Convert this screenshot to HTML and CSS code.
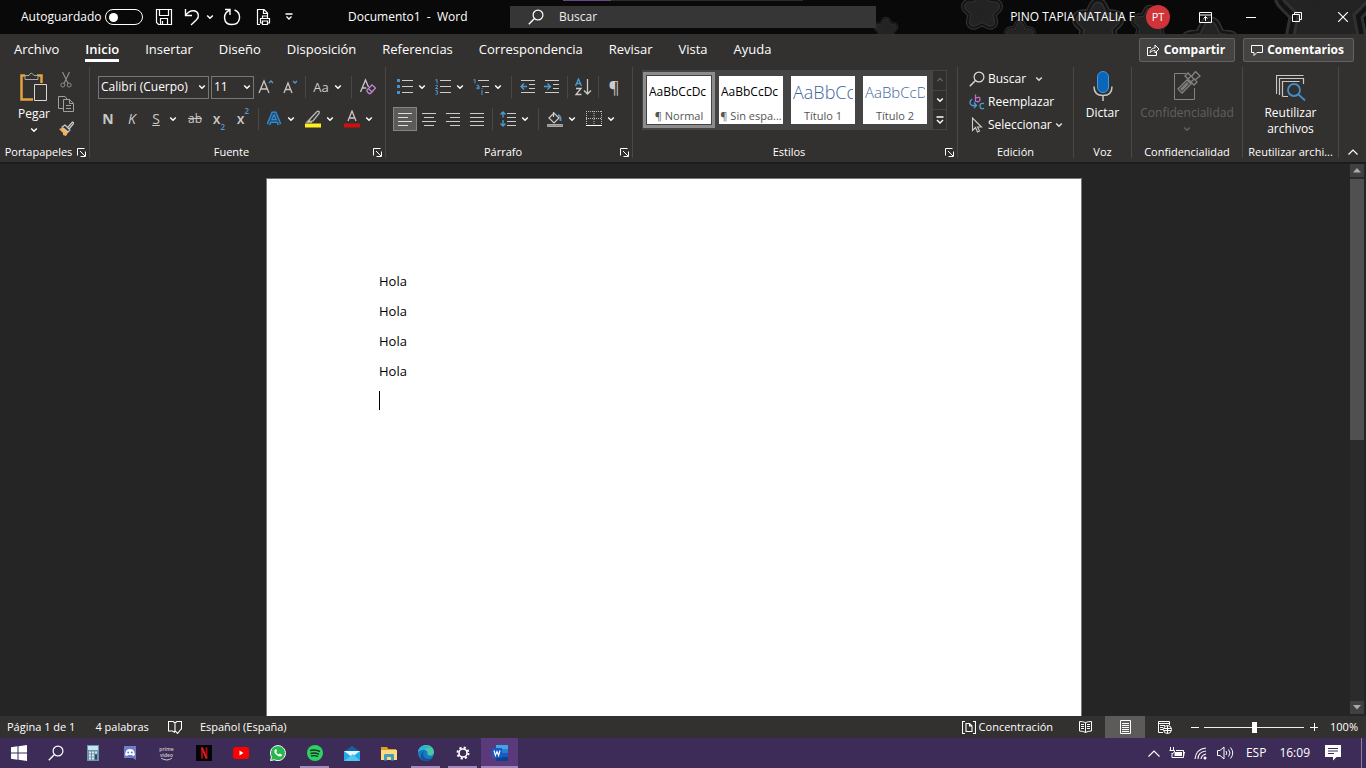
FILE: index.html
```html
<!DOCTYPE html>
<html lang="es">
<head>
<meta charset="utf-8">
<title>Documento1 - Word</title>
<link rel="stylesheet" href="styles.css">
</head>
<body>
<svg class="defs" aria-hidden="true">
  <symbol id="chev" viewBox="0 0 8 8"><path d="M1.2 2.5 4 5.2 6.800 2.500" fill="none" stroke="currentColor" stroke-width="1.500"/></symbol>
  <symbol id="launch" viewBox="0 0 9 9"><path d="M.5 7.500V.5H7.500M3 3l5 5M8.500 3.500v5h-5" fill="none" stroke="currentColor"/></symbol>
  <symbol id="lens" viewBox="0 0 16 16"><path d="M.8 15.200 6.200 9.800" stroke="currentColor" stroke-width="1.400"/><circle cx="10" cy="6" r="4.900" fill="none" stroke="currentColor" stroke-width="1.200"/></symbol>
  <symbol id="star" viewBox="0 0 40 40">
    <g stroke-linejoin="round">
      <path d="m20 9 3.500 7 7.500 1-5.500 5.500L27 30l-7-3.500L13 30l1.500-7.500L9 17l7.500-1z" fill="#303031" stroke="#303031" stroke-width="13"/>
      <path d="m20 9 3.500 7 7.500 1-5.500 5.500L27 30l-7-3.500L13 30l1.500-7.500L9 17l7.500-1z" fill="#141415" stroke="#141415" stroke-width="11"/>
      <path d="m20 9 3.500 7 7.500 1-5.500 5.500L27 30l-7-3.500L13 30l1.500-7.500L9 17l7.500-1z" fill="#303031" stroke="#303031" stroke-width="8"/>
      <path d="m20 9 3.500 7 7.500 1-5.500 5.500L27 30l-7-3.500L13 30l1.500-7.500L9 17l7.500-1z" fill="#232324" stroke="#232324" stroke-width="6"/>
    </g>
  </symbol>
</svg>

<header class="titlebar">
  <svg class="pattern" viewBox="0 0 500 34" aria-hidden="true">
    <use href="#star" x="6" y="15" width="28" height="28"/>
    <use href="#star" x="92" y="-14" width="48" height="48"/>
    <use href="#star" x="136" y="17" width="36" height="36"/>
    <use href="#star" x="202" y="-6" width="60" height="60"/>
    <use href="#star" x="262" y="2" width="44" height="44"/>
    <use href="#star" x="310" y="12" width="68" height="68"/>
    <use href="#star" x="400" y="-56" width="120" height="120"/>
  </svg>
  <div class="quick">
    <label class="autosave">Autoguardado <input type="checkbox"></label>
    <button class="q" aria-label="Guardar"><svg width="18" height="18"><path d="M1.500 1.500h15v15h-13l-2-2zM4.500 1.500v6h9v-6M5.500 16.500v-6h7v6M7.500 13v3" fill="none" stroke="currentColor" stroke-width="1.200"/></svg></button>
    <button class="q" aria-label="Deshacer"><svg width="16" height="18"><path d="M1.500 1v6.500H8M1.800 7.200C4 4 7 2.500 10 2.800c5 1 5.500 6 2.500 9L7 17" fill="none" stroke="currentColor" stroke-width="1.400"/></svg></button>
    <button class="ch" aria-label="Opciones de deshacer"><svg width="8" height="8"><use href="#chev"/></svg></button>
    <button class="q" aria-label="Repetir"><svg width="18" height="18"><path d="M2 1.500h5V7M7 2C-1 5.500 0 16.500 9 16.500S19 5 11.500 2" fill="none" stroke="currentColor" stroke-width="1.400"/></svg></button>
    <button class="q print" aria-label="Impresión rápida"><svg width="16" height="18"><path d="M4 16.500H1.500v-15H8l3.500 3.500v3M7.500 1.500v4h4M6.500 10.500V8h5v2.500M6.500 15h-2v-4.500h9V15h-2M6.500 13h5v3.500h-5z" fill="none" stroke="currentColor" stroke-width="1.200"/></svg></button>
    <button class="q more" aria-label="Personalizar"><svg width="8" height="8"><path d="M.5 1h7M1.500 3.500 4 6l2.500-2.500" fill="none" stroke="currentColor" stroke-width="1.300"/></svg></button>
  </div>
  <div class="doctitle">Documento1&nbsp; -&nbsp; Word</div>
  <label class="search"><svg width="16" height="16"><use href="#lens"/></svg><input type="text" placeholder="Buscar" aria-label="Buscar"></label>
  <div class="account"><span>PINO TAPIA NATALIA F</span><span class="avatar">PT</span></div>
  <div class="winbtns">
    <button aria-label="Opciones de la cinta"><svg width="13" height="11"><path d="M.5.500h12v10H.5zM.5 3h12M6.500 9V4.500M4.500 6.500l2-2 2 2" fill="none" stroke="currentColor"/></svg></button>
    <button aria-label="Minimizar"><svg width="10" height="10"><path d="M0 5.500h10" stroke="currentColor"/></svg></button>
    <button aria-label="Restaurar"><svg width="10" height="10"><path d="M.5 2.500h7v7h-7zM2.500 2.500v-2h7v7h-2" fill="none" stroke="currentColor"/></svg></button>
    <button aria-label="Cerrar"><svg width="10" height="10"><path d="m0 0 10 10M10 0 0 10" stroke="currentColor" stroke-width="1.200"/></svg></button>
  </div>
</header>

<nav class="tabs">
  <a href="#">Archivo</a><a href="#" class="active">Inicio</a><a href="#">Insertar</a><a href="#">Diseño</a><a href="#">Disposición</a><a href="#">Referencias</a><a href="#">Correspondencia</a><a href="#">Revisar</a><a href="#">Vista</a><a href="#">Ayuda</a>
  <div class="share">
    <button><svg width="13" height="12"><path d="M4 3.500H.5v8h9V8M3 8.500C3.500 5 6 4 8 4V1l4 4-4 4V6.500C6 6.500 4.500 7 3 8.500z" fill="none" stroke="currentColor"/></svg>Compartir</button>
    <button><svg width="12" height="12"><path d="M.5 1.500h11v7H6l-3 3v-3H.5z" fill="none" stroke="currentColor"/></svg>Comentarios</button>
  </div>
</nav>

<section class="ribbon">
  <div class="group g-clip">
    <div class="body clip">
      <button class="big">
        <svg width="28" height="30"><path d="M5 3.500H1.500v24H13M17 3.500h4.500V11" fill="none" stroke="#e5a33d" stroke-width="2.500"/><path d="M5 7.500v-4h4q2-4.500 5 0h4v4z" fill="#33312f" stroke="#a8a8a8"/><path d="M14.500 12.500h12v16h-12z" fill="#33312f" stroke="#d8d8d8"/></svg>
        <span>Pegar</span><svg width="8" height="8"><use href="#chev"/></svg>
      </button>
      <div class="stack">
        <button class="b" aria-label="Cortar"><svg width="12" height="16"><path d="M2.500 0 8 11.500M9.500 0 4 11.500" fill="none" stroke="#8c8c8c" stroke-width="1.200"/><circle cx="2.800" cy="13" r="2" fill="none" stroke="#8c8c8c"/><circle cx="9.200" cy="13" r="2" fill="none" stroke="#8c8c8c"/></svg></button>
        <button class="b" aria-label="Copiar"><svg width="16" height="16"><path d="M5 12.500H.5V.5H7L9 3M5.500 3.500h6l4 4v8h-10zM11.500 3.500v4h4M8 9.500h5M8 12.500h5" fill="none" stroke="#a0a0a0"/></svg></button>
        <button class="b" aria-label="Copiar formato"><svg width="16" height="15"><path d="m1 8 6-2 4 4-3 5-3-1v-2z" fill="#edb45c"/><path d="m7 4 5 5-2 2-6-5zM10 6l4.500-5L16 2l-5 6" fill="#33312f" stroke="#ccc" stroke-width="1.200"/></svg></button>
      </div>
    </div>
    <div class="glabel"><span>Portapapeles</span><button aria-label="Más de Portapapeles"><svg width="9" height="9"><use href="#launch"/></svg></button></div>
  </div>

  <div class="group g-font">
    <div class="body rows">
      <div class="row combos">
        <span class="combo fam"><select aria-label="Fuente"><option>Calibri (Cuerpo)</option></select><svg width="8" height="8"><use href="#chev"/></svg></span>
        <span class="combo size"><select aria-label="Tamaño"><option>11</option></select><svg width="8" height="8"><use href="#chev"/></svg></span>
        <button class="b" aria-label="Aumentar"><svg width="16" height="16"><path d="M1 14 6 2l5 12M2.800 10h6.400" fill="none" stroke="#c8c8c8" stroke-width="1.300"/><path d="m11 4 2-2 2 2" fill="none" stroke="#4a9bd8" stroke-width="1.300"/></svg></button>
        <button class="b" aria-label="Disminuir"><svg width="16" height="16"><path d="m2 14 4-10 4 10M3.500 10.500h5" fill="none" stroke="#c8c8c8" stroke-width="1.300"/><path d="m11 2 2 2 2-2" fill="none" stroke="#4a9bd8" stroke-width="1.300"/></svg></button>
        <i class="sep"></i>
        <button class="b case">Aa</button><button class="ch" aria-label="Opciones de mayúsculas"><svg width="8" height="8"><use href="#chev"/></svg></button>
        <i class="sep wide"></i>
        <button class="b" aria-label="Borrar formato"><svg width="18" height="18"><path d="M1.500 14 6.500 2l3 7M3.300 10h4" fill="none" stroke="#c8c8c8" stroke-width="1.300"/><path d="m8 12 5-5 3.500 3-5 5.500H10L8 13.500zM9.500 10.500l3.500 3.500" fill="none" stroke="#c183cf" stroke-width="1.300"/></svg></button>
      </div>
      <div class="row">
        <button class="b t bold">N</button><button class="b t ital">K</button><button class="b t under">S</button><button class="ch" aria-label="Opciones de subrayado"><svg width="8" height="8"><use href="#chev"/></svg></button>
        <button class="b t strike gap">ab</button>
        <button class="b t script">x<sub>2</sub></button><button class="b t script">x<sup>2</sup></button>
        <i class="sep"></i>
        <button class="b" aria-label="Efectos de texto"><svg width="16" height="16"><path d="m2.500 13.500 4.500-11h2l4.500 11M4.500 10h7" fill="none" stroke="#2e8fdc" stroke-width="4"/><path d="m2.500 13.500 4.500-11h2l4.500 11M4.500 10h7" fill="none" stroke="#2b4d6b" stroke-width="1.500"/></svg></button><button class="ch" aria-label="Opciones de efectos"><svg width="8" height="8"><use href="#chev"/></svg></button>
        <button class="b gap" aria-label="Resaltado"><svg width="16" height="18"><path d="m5 9 7-7.500q3-1 2 2L8 11l-4 1zM5 9 2 12h5" fill="none" stroke="#bbb" stroke-width="1.300"/><path d="M0 13.500h16v4H0z" fill="#ffef20"/></svg></button><button class="ch" aria-label="Opciones de resaltado"><svg width="8" height="8"><use href="#chev"/></svg></button>
        <button class="b gap" aria-label="Color de fuente"><svg width="16" height="18"><path d="m4 11 4-10 4 10M5.300 8h5.400" fill="none" stroke="#c8c8c8" stroke-width="1.300"/><path d="M0 13.500h16v4H0z" fill="#d01010"/></svg></button><button class="ch" aria-label="Opciones de color"><svg width="8" height="8"><use href="#chev"/></svg></button>
      </div>
    </div>
    <div class="glabel"><span>Fuente</span><button aria-label="Más de Fuente"><svg width="9" height="9"><use href="#launch"/></svg></button></div>
  </div>

  <div class="group g-para">
    <div class="body rows">
      <div class="row">
        <button class="b" aria-label="Viñetas"><svg width="16" height="16"><path d="M0 0h3v3H0zM0 6h3v3H0zM0 12h3v3H0z" fill="#4a8fc7"/><path d="M5 1.500h11M5 7.500h11M5 13.500h11" stroke="#ccc"/></svg></button><button class="ch" aria-label="Opciones de viñetas"><svg width="8" height="8"><use href="#chev"/></svg></button>
        <button class="b list" aria-label="Numeración"><svg width="16" height="16"><path d="M.5 1 2 .500v4M.5 6.500Q3 5.500 2.500 7.500L.5 9.500h2.500M.5 11.500q2.500-.5 2 1.200l-1 .5q2 .3 1 1.800-1 .8-2 .3" fill="none" stroke="#4a9bd8"/><path d="M5 1.500h11M5 7.500h11M5 13.500h11" stroke="#ccc"/></svg></button><button class="ch" aria-label="Opciones de numeración"><svg width="8" height="8"><use href="#chev"/></svg></button>
        <button class="b list" aria-label="Lista multinivel"><svg width="16" height="16"><path d="M.5 1 2 .500v4M3.500 6.500q2.500-1 2.500.5v3.200M6 8q-2.500 0-2.500 1.200T6 9.300M9 11v5M9 9v1" fill="none" stroke="#4a9bd8"/><path d="M5 1.500h11M9 7.500h7M12 13.500h4" stroke="#ccc"/></svg></button><button class="ch" aria-label="Opciones multinivel"><svg width="8" height="8"><use href="#chev"/></svg></button>
        <i class="sep wide"></i>
        <button class="b" aria-label="Disminuir sangría"><svg width="16" height="16"><path d="M1 1.500h14M9 5.500h6M9 9.500h6M1 13.500h14" stroke="#ccc"/><path d="M7 7.500H1M4 4.500l-3 3 3 3" fill="none" stroke="#4a9bd8" stroke-width="1.300"/></svg></button>
        <button class="b" aria-label="Aumentar sangría"><svg width="16" height="16"><path d="M1 1.500h14M9 5.500h6M9 9.500h6M1 13.500h14" stroke="#ccc"/><path d="M0 7.500h6M3.500 4.500l3 3-3 3" fill="none" stroke="#4a9bd8" stroke-width="1.300"/></svg></button>
        <i class="sep"></i>
        <button class="b" aria-label="Ordenar"><svg width="18" height="18"><path d="m1.500 8 3-7 3 7M2.500 5.500h4" fill="none" stroke="#4a9bd8" stroke-width="1.300"/><path d="M2 10.500h5l-5 6h5.500M13.500 1v15M10 12.500l3.500 3.500 3.500-3.500" fill="none" stroke="#ccc" stroke-width="1.300"/></svg></button>
        <i class="sep"></i>
        <button class="b pil">¶</button>
      </div>
      <div class="row">
        <button class="b on" aria-label="Izquierda"><svg width="16" height="15"><path d="M1 1.500h14M1 5.500h10M1 9.500h14M1 13.500h10" stroke="#ddd"/></svg></button>
        <button class="b" aria-label="Centrar"><svg width="16" height="15"><path d="M1 1.500h14M3 5.500h10M1 9.500h14M3 13.500h10" stroke="#ccc"/></svg></button>
        <button class="b" aria-label="Derecha"><svg width="16" height="15"><path d="M1 1.500h14M5 5.500h10M1 9.500h14M5 13.500h10" stroke="#ccc"/></svg></button>
        <button class="b" aria-label="Justificar"><svg width="16" height="15"><path d="M1 1.500h14M1 5.500h14M1 9.500h14M1 13.500h14" stroke="#ccc"/></svg></button>
        <i class="sep"></i>
        <button class="b" aria-label="Interlineado"><svg width="16" height="16"><path d="M7 2.500h9M7 6.500h9M7 10.500h9M7 14.500h9" stroke="#ccc"/><path d="M3 1v5.500M.5 3.500 3 1l2.500 2.500M3 9v6M.5 12.500 3 15l2.500-2.500" fill="none" stroke="#4a9bd8" stroke-width="1.300"/></svg></button><button class="ch" aria-label="Opciones de interlineado"><svg width="8" height="8"><use href="#chev"/></svg></button>
        <i class="sep wide"></i>
        <button class="b" aria-label="Sombreado"><svg width="16" height="17"><path d="m2 7 5-5 5 5-5 5zM6.500 6V1" fill="none" stroke="#ccc" stroke-width="1.200"/><path d="M11 4q3 1 2.500 6" fill="none" stroke="#5d92c4" stroke-width="2"/><path d="M.5 13.500h15v2H.5z" fill="#888" stroke="#aaa"/></svg></button><button class="ch" aria-label="Opciones de sombreado"><svg width="8" height="8"><use href="#chev"/></svg></button>
        <button class="b gap" aria-label="Bordes"><svg width="16" height="16"><path d="M.5 0v14M15.500 0v14M8 0v14M0 .5h16M0 7.500h16" stroke="#bbb" stroke-dasharray="1 1"/><path d="M0 14.500h16" stroke="#fff"/></svg></button><button class="ch" aria-label="Opciones de bordes"><svg width="8" height="8"><use href="#chev"/></svg></button>
      </div>
    </div>
    <div class="glabel"><span>Párrafo</span><button aria-label="Más de Párrafo"><svg width="9" height="9"><use href="#launch"/></svg></button></div>
  </div>

  <div class="group g-styles">
    <div class="body">
      <div class="gallery">
        <button class="tile sel"><span class="smp">AaBbCcDc</span><span class="nm">¶ Normal</span></button>
        <button class="tile"><span class="smp">AaBbCcDc</span><span class="nm">¶ Sin espa...</span></button>
        <button class="tile h1"><span class="smp">AaBbCc</span><span class="nm">Título 1</span></button>
        <button class="tile h2"><span class="smp">AaBbCcD</span><span class="nm">Título 2</span></button>
        <div class="spin">
          <button class="off" aria-label="Anterior"><svg width="8" height="8"><path d="M1.500 5 4 2.500 6.500 5" fill="none" stroke="currentColor" stroke-width="1.300"/></svg></button>
          <button aria-label="Siguiente"><svg width="8" height="8"><use href="#chev"/></svg></button>
          <button aria-label="Más estilos"><svg width="8" height="8"><path d="M.5 1h7M1 4l3 3 3-3" fill="none" stroke="currentColor" stroke-width="1.400"/></svg></button>
        </div>
      </div>
    </div>
    <div class="glabel"><span>Estilos</span><button aria-label="Más de Estilos"><svg width="9" height="9"><use href="#launch"/></svg></button></div>
  </div>

  <div class="group g-edit">
    <div class="body edit">
      <button><svg width="16" height="16"><use href="#lens"/></svg><span>Buscar</span><svg class="far" width="8" height="8"><use href="#chev"/></svg></button>
      <button><svg width="16" height="16"><g fill="none" stroke-width="1.300"><path d="M6.500.5V8M6.500 4q5-2 4.500 1.500Q10 9 6.500 7" stroke="#bf6fce"/><path d="M15 9.500q-4-1-4 2.500t4 2.500M3 5q-4 4 0 6.500h4M5 8.500l2.500 3L5 14" stroke="#4a9bd8"/></g></svg><span>Reemplazar</span></button>
      <button><svg width="16" height="16"><path d="M3.500 1v12.500l3-3 2 4.500 2-1-2-4h4z" fill="none" stroke="#ccc" stroke-width="1.100"/></svg><span>Seleccionar</span><svg width="8" height="8"><use href="#chev"/></svg></button>
    </div>
    <div class="glabel"><span>Edición</span></div>
  </div>

  <div class="group g-voice">
    <div class="body"><button class="big"><svg width="20" height="30"><rect x="4.500" y=".5" width="11" height="21" rx="5.500" fill="#0a66b8" stroke="#4796d8"/><path d="M1 15.500q0 9 9 9t9-9M10 24.500V30" fill="none" stroke="#c8c8c8" stroke-width="1.500"/></svg><span>Dictar</span></button></div>
    <div class="glabel"><span>Voz</span></div>
  </div>

  <div class="group g-conf">
    <div class="body"><button class="big" disabled><svg width="28" height="30"><path d="M13 2.500H1.500v26h20V17" fill="none" stroke="#858381"/><path d="m5 18 9-9 4 4-9 9zM8 18l6-6 1 1-6 6zM12 5l3-3 9 9-3 3zM18.500 5.500l4-5 4.500 4.500-5 4M15 8l3-3M18 11l3-3" fill="none" stroke="#858381" stroke-width="1.300"/></svg><span>Confidencialidad</span><svg width="8" height="8"><use href="#chev"/></svg></button></div>
    <div class="glabel"><span>Confidencialidad</span></div>
  </div>

  <div class="group g-reuse">
    <div class="body"><button class="big"><svg width="30" height="30"><path d="M.5 23V4.500h27M3.500 24V7.500h24V13M6.500 25.500v-15h17M6.500 25.500H12" fill="none" stroke="#c8c8c8" stroke-width="1.200"/><circle cx="18" cy="19" r="6" fill="none" stroke="#3f8fcc" stroke-width="1.800"/><path d="m22.500 23.500 6.500 6" stroke="#3f8fcc" stroke-width="1.800"/></svg><span>Reutilizar<br>archivos</span></button></div>
    <div class="glabel"><span>Reutilizar archi...</span></div>
  </div>
  <button class="collapse" aria-label="Contraer"><svg width="10" height="6"><path d="m.5 5.500 4.500-4.500 4.500 4.500" fill="none" stroke="currentColor" stroke-width="1.200"/></svg></button>
</section>

<main class="workspace">
  <div class="canvas">
    <article class="page"><p>Hola</p><p>Hola</p><p>Hola</p><p>Hola</p><div class="caret"></div></article>
  </div>
  <div class="scroll">
    <button aria-label="Arriba"><svg width="8" height="5"><path d="M0 4.500 4 0l4 4.500z" fill="currentColor"/></svg></button>
    <div class="track"><div class="thumb"></div></div>
    <button aria-label="Abajo"><svg width="8" height="5"><path d="M0 0h8L4 4.500z" fill="currentColor"/></svg></button>
  </div>
</main>

<footer class="status">
  <span>Página 1 de 1</span><span class="words">4 palabras</span>
  <button class="proof" aria-label="Revisión"><svg width="14" height="13"><path d="M7 11.500 4.500 10H.5V.5H5L7 2l2-1.500h4.500v8M7 2v9M7.500 10l2 2.500 4-5" fill="none" stroke="currentColor" stroke-width="1.100"/></svg></button>
  <span class="lang">Español (España)</span>
  <button class="focus"><svg width="14" height="13"><path d="M3 .5H.5v12H3M11 .5h2.500v12H11M4 2.500h3.500L10 5v5.500H4zM7.500 2.500V5H10" fill="none" stroke="currentColor" stroke-width="1.100"/></svg>Concentración</button>
  <button class="view" aria-label="Lectura"><svg width="13" height="12"><path d="M6.500 1.500v10M6.500 1.500Q4 .5.500.500v9.500q3.500 0 6 1.500 2.500-1.500 6-1.500V.5q-3.500 0-6 1M2 3.500h3M2 5.500h3M2 7.500h3M8 3.500h3M8 5.500h3M8 7.500h3" fill="none" stroke="currentColor"/></svg></button>
  <button class="view on" aria-label="Impresión"><svg width="11" height="14"><path d="M.5.500h10v13H.5zM2 3.500h7M2 5.500h7M2 7.500h7M2 9.500h7M2 11.500h7" fill="none" stroke="currentColor"/></svg></button>
  <button class="view" aria-label="Web"><svg width="14" height="13"><path d="M5 11.500H.5V.5h11V4M.5 2.500h11M2 4.500h5M2 6.500h3M2 8.500h3" fill="none" stroke="currentColor"/><circle cx="9.500" cy="8.500" r="4" fill="none" stroke="currentColor"/><path d="M5.500 7.500h8M5.500 9.500h8M9.500 4.500v8" stroke="currentColor"/></svg></button>
  <button class="zb" aria-label="Alejar"><svg width="9" height="9"><path d="M0 4.500h8" stroke="currentColor"/></svg></button>
  <input type="range" min="0" max="100" value="50" aria-label="Zoom">
  <button class="zb" aria-label="Acercar"><svg width="9" height="9"><path d="M0 4.500h8M4.500 0v8" stroke="currentColor"/></svg></button>
  <span class="pct">100%</span>
</footer>

<nav class="taskbar">
  <button aria-label="Inicio"><svg width="16" height="16"><path d="m0 2.200 6.500-.9v6.200H0zM7.500 1.200 16 0v7.500H7.500zM0 8.500h6.500v6.200L0 13.800zM7.500 8.500H16V16l-8.500-1.200z" fill="#fff"/></svg></button>
  <button aria-label="Buscar"><svg width="16" height="16"><use href="#lens"/></svg></button>
  <button aria-label="Calculadora"><svg width="12" height="16"><path d="M0 0h12v16H0z" fill="#6f93a8"/><path d="M1 1h10v4H1z" fill="#c3e7f0"/><path d="M2 6.500h2v2H2zM5 6.500h2v2H5zM8 6.500h2v2H8zM2 9.500h2v2H2zM5 9.500h2v2H5zM2 12.500h2v2H2zM5 12.500h2v2H5z" fill="#dbe9ef"/><path d="M8 9.500h2v5H8z" fill="#244d76"/></svg></button>
  <button aria-label="Discord"><svg width="12" height="14"><path d="M0 0h12v14l-3-2H0z" fill="#6c7fc8"/><path d="M2 5q1-2 4-2t4 2l1 4-2 1-1-1H4l-1 1-2-1z" fill="#fff"/><circle cx="4.200" cy="6.500" r="1" fill="#6c7fc8"/><circle cx="7.800" cy="6.500" r="1" fill="#6c7fc8"/></svg></button>
  <button aria-label="Prime Video" class="prime"><span>prime</span><span>video</span><svg width="12" height="3"><path d="M0 0q6 4 11 0" fill="none" stroke="currentColor"/></svg></button>
  <button aria-label="Netflix"><svg width="16" height="16"><path d="M0 0h16v16H0z" fill="#050505"/><path d="M5 2.500h2v11H5zM9.500 2.500h2v11h-2z" fill="#9e0b12"/><path d="M5 2.500h2l4.500 11h-2z" fill="#e51a22"/></svg></button>
  <button aria-label="YouTube"><svg width="16" height="12"><rect width="16" height="12" rx="3" fill="#f00"/><path d="m6.500 3.500 4 2.500-4 2.500z" fill="#fff"/></svg></button>
  <button aria-label="WhatsApp"><svg width="16" height="16"><path d="M.5 15.500 1.500 12A7.500 7.500 0 1 1 4.500 14.800z" fill="#28b64f" stroke="#fff"/><path d="M5 4.500q1-1 1.500 0L7 6 6.200 7q1 2 2.600 2.600l1-1 2 1q.5.8-.6 1.600-1.700 1-4.500-1.200T4.300 6z" fill="#fff"/></svg></button>
  <button aria-label="Spotify" class="open"><svg width="16" height="16"><circle cx="8" cy="8" r="8" fill="#2bd262"/><path d="M3 5.500q5-1.500 10 1M3.500 8.500q4.500-1.200 8.500.8M4 11q4-1 7 .7" fill="none" stroke="#1b3327" stroke-width="1.400"/></svg></button>
  <button aria-label="Correo"><svg width="16" height="15"><path d="M0 5.500 8 0l8 5.500z" fill="#1362a8"/><path d="M0 5h16v10H0z" fill="#24a9e8"/><path d="M0 5h16L8 11z" fill="#e9f7fc"/><path d="m0 15 9-7 7 7z" fill="#50c6f3"/></svg></button>
  <button aria-label="Explorador"><svg width="16" height="15"><path d="M0 1h6l1.500 2H15v4H0z" fill="#e39b22"/><path d="M0 4h16v10H0z" fill="#fbdc7c"/><path d="M3 9q0-1 1-1h8q1 0 1 1v5.500h-3V11H6v3.500H3z" fill="#4a9cbf"/></svg></button>
  <button aria-label="Edge" class="open"><svg width="16" height="16"><circle cx="8" cy="8" r="8" fill="#1579c6"/><path d="M0 7C1 1 6 0 8 0c5 0 8 3.500 8 7 0 3-2.500 4-5 3.500Q9 10 9.500 8.500C10 6 7 4 4 4.500Q1 5 0 7z" fill="#49c9a0"/><path d="M0 7q1-5 6-6 4-1 7 2-4-1-6 1.500Q3 4 0 7z" fill="#2fb1dd"/><path d="M6 6q-3 5 2 7.500 3 1 6-.5-2 3-6 3-6-1-5-6 1-3 3-4z" fill="#155099"/></svg></button>
  <button aria-label="Configuración" class="open"><svg width="14" height="14"><circle cx="7" cy="7" r="4" fill="none" stroke="#fff" stroke-width="1.600"/><circle cx="7" cy="7" r="5.500" fill="none" stroke="#fff" stroke-width="2" stroke-dasharray="2.160 2.160"/></svg></button>
  <button aria-label="Word" class="open current"><svg width="16" height="16"><path d="M4 0h12v4H4z" fill="#41a5ee"/><path d="M4 4h12v4H4z" fill="#2b7cd3"/><path d="M4 8h12v4H4z" fill="#185abd"/><path d="M4 12h12v4H4z" fill="#103f91"/><path d="M0 3h10v10H0z" fill="#185abd"/><path d="m2 5.500 1.400 5L5 6.500l1.600 4 1.400-5" fill="none" stroke="#fff" stroke-width="1.200"/></svg></button>
  <div class="tray">
    <button aria-label="Iconos ocultos"><svg width="12" height="7"><path d="m.5 6.500 5.500-5.500 5.500 5.500" fill="none" stroke="currentColor" stroke-width="1.200"/></svg></button>
    <button aria-label="Batería"><svg width="16" height="12"><path d="M1.500 0v3M4.500 0v3M.5 3.500h5V5L3 7M3 6v4.500h11.500v-7H7M14.500 5.500H16v3" fill="none" stroke="currentColor"/><path d="M5.500 5H13v4H5.500z" fill="currentColor"/></svg></button>
    <button aria-label="Wi-Fi"><svg width="14" height="13"><path d="M1 12Q2 2 12 1M4 12q0-7 8-8M7 12q.500-4 5-5" fill="none" stroke="currentColor" stroke-width="1.100"/><circle cx="11" cy="11" r="1.500" fill="currentColor"/></svg></button>
    <button aria-label="Volumen"><svg width="17" height="14"><path d="M.5 4.500H3l4-3.500v12L3 9.500H.5zM9 5q1.500 2 0 4M11.500 3.500q3 3.500 0 7M13.500 1.500q4.500 5.500 0 11" fill="none" stroke="currentColor"/></svg></button>
    <span class="kb">ESP</span><span class="clock">16:09</span>
    <button class="note" aria-label="Notificaciones"><svg width="16" height="16"><path d="M0 0h16v12h-4.500L8 15.500V12H0z" fill="currentColor"/><path d="M3 3.500h10M3 6h10M3 8.500h6" stroke="#3d2c57"/></svg></button>
  </div>
</nav>
</body>
</html>
```
FILE: styles.css
```css
* { box-sizing: border-box; }
html, body { height: 100%; margin: 0; }
body { display: flex; flex-direction: column; overflow: hidden; background: #252525; color: #fff; font: 12px/16px "Open Sans", "Noto Sans", sans-serif; }
button { display: flex; align-items: center; justify-content: center; flex: none; padding: 0; border: 0; background: none; color: inherit; font: inherit; }
a { color: inherit; text-decoration: none; }
svg { display: block; flex: none; }
.defs { position: absolute; width: 0; height: 0; }

.titlebar { position: relative; display: flex; align-items: center; flex: none; height: 34px; background: #090909; }
.titlebar > * { position: relative; }
.titlebar > .pattern { position: absolute; top: 0; right: 0; width: 500px; height: 34px; }
.titlebar::after { content: ""; position: absolute; top: 0; left: 563px; width: 240px; height: 1px; background: linear-gradient(90deg, #65478a 20%, #2c2c2c 20%); }
.quick { display: flex; align-items: center; width: 348px; padding-left: 21px; }
.autosave { display: flex; align-items: center; flex: none; width: 122px; margin-right: 7px; white-space: nowrap; }
.autosave input { appearance: none; display: flex; align-items: center; width: 38px; height: 16px; margin: 0 0 0 auto; padding-left: 3px; border: 1px solid #fff; border-radius: 8px; }
.autosave input::before { content: ""; width: 9px; height: 9px; border-radius: 50%; background: #fff; }
.q { width: 32px; height: 32px; }
.q + .q { margin-left: -2px; }
.ch { width: 12px; height: 24px; margin-left: -1px; }
.quick .ch { margin-left: -4px; }
.quick .q:first-of-type { width: 28px; }
.quick .print { margin-left: 0; }
.quick .more { width: 18px; margin-left: 0; }
.doctitle { width: 162px; white-space: nowrap; }
.search { display: flex; align-items: center; flex: 0 1 366px; height: 22px; padding-left: 18px; background: #363636; }
.search input { flex: 1; min-width: 0; margin-left: 15px; padding: 0; border: 0; outline: 0; background: none; color: #fff; font: inherit; }
.search input::placeholder { color: #eee; opacity: 1; }
.account { display: flex; align-items: center; gap: 11px; margin-left: auto; white-space: nowrap; }
.avatar { width: 24px; height: 24px; border-radius: 50%; background: #d13438; line-height: 24px; text-align: center; font-size: 11px; }
.winbtns { display: flex; margin-left: 12px; }
.winbtns button { width: 46px; height: 34px; }

.tabs { display: flex; align-items: center; flex: none; gap: 26px; height: 32px; padding: 0 12px 0 14px; background: #33312f; font-size: 13px; line-height: 18px; white-space: nowrap; }
.tabs a { padding: 2px 0 1px; border-bottom: 3px solid transparent; }
.tabs .active { border-color: #fff; font-weight: 600; }
.share { display: flex; gap: 8px; margin-left: auto; }
.share button { gap: 4px; height: 24px; padding: 0 9px 0 7px; border: 1px solid #626262; border-radius: 2px; background: #444342; font-size: 12px; font-weight: 700; }

.ribbon { display: flex; flex: none; height: 96px; padding: 1px 0 4px; background: #33312f; }
.ribbon + .workspace { border-top: 2px solid #1c1c1c; }
.group { display: flex; flex: none; flex-direction: column; justify-content: space-between; border-right: 1px solid #4a4846; }
.g-clip { width: 90px; }
.g-font { width: 296px; }
.g-para { width: 247px; }
.g-styles { flex: 1; }
.g-edit { width: 116px; }
.g-voice { width: 58px; }
.g-conf { width: 111px; }
.g-reuse { width: 96px; }
.glabel { display: flex; align-items: center; height: 12px; padding: 0 2px; white-space: nowrap; font-size: 11px; }
.glabel span { flex: 1; text-align: center; }
.glabel button { width: 12px; height: 12px; }
.clip { display: flex; padding: 1px 0 0 12px; }
.big { flex-direction: column; width: 100%; gap: 4px; padding-top: 4px; }
.big:disabled { color: #62605e; }
.clip .big { width: 44px; justify-content: flex-start; }
.stack { display: flex; flex-direction: column; }
.stack .b { width: 20px; }
.b { width: 24px; height: 24px; }
.rows { display: flex; flex-direction: column; gap: 8px; padding: 8px 0 0 6px; }
.g-para .rows { padding-left: 7px; }
.row { display: flex; align-items: center; height: 24px; }
.sep { flex: none; width: 1px; height: 22px; margin: 0 3px; background: #4a4846; }
.sep.wide { margin: 0 4px 0 7px; }
.gap { margin-left: 4px; }
.combos { padding-left: 2px; }
.combo { display: flex; align-items: center; flex: none; height: 23px; padding: 0 2px; border: 1px solid #777; }
.combo select { appearance: none; flex: 1; min-width: 0; height: 21px; padding: 0; border: 0; outline: 0; background: none; color: #fff; font: inherit; }
.fam { width: 111px; margin-right: 2px; }
.size { width: 43px; }
.case { color: #ccc; font-size: 13px; }
.t { color: #c8c8c8; font-size: 14px; }
.bold { font-weight: 700; }
.ital { font-style: italic; }
.under { text-decoration: underline; }
.strike { font-size: 12px; text-decoration: line-through; }
.script { font-weight: 600; }
.script sub, .script sup { color: #4a9bd8; font-size: 8px; line-height: 8px; }
.script sub { align-self: flex-end; }
.script sup { align-self: flex-start; }
.pil { color: #ccc; font-size: 17px; }
.list { margin-left: 3px; }
.on { border: 1px solid #868482; background: #5d5b59; }

.gallery { display: flex; flex: none; width: 305px; height: 60px; margin: 3px 0 0 9px; padding: 1px; background: #444; }
.tile { flex-direction: column; flex: none; justify-content: space-between; width: 64px; height: 48px; margin: 5px 4px; padding: 7px 2px 0; overflow: hidden; background: #fff; color: #000; white-space: nowrap; }
.tile.sel { outline: 3px solid #8c8c8c; outline-offset: 1px; }
.tile .smp { width: 60px; height: 20px; overflow: hidden; line-height: 18px; text-align: left; }
.tile .nm { color: #555; font-size: 11px; line-height: 16px; }
.h1 .smp, .h2 .smp { color: #3c659c; font-weight: 300; }
.h1 .smp { font-size: 18px; }
.h2 .smp { font-size: 15px; }
.spin { display: flex; flex: 1; flex-direction: column; gap: 1px; margin-left: 2px; }
.spin button { flex: 1; background: #302f2e; }
.spin .off { color: #666; }

.edit { display: flex; flex-direction: column; padding-left: 11px; }
.edit button { justify-content: flex-start; height: 23px; gap: 3px; color: #ddd; }
.edit span { color: #fff; }
.edit .far { margin-left: 6px; }
.collapse { align-self: flex-end; flex: none; width: 27px; height: 12px; }

.workspace { display: flex; flex: 1; min-height: 0; background: #252525; }
.canvas { display: flex; flex: 1; justify-content: center; min-width: 0; padding: 14px 2px 0 0; overflow: hidden; }
.page { width: 816px; padding: 87px 112px; border: 1px solid #777; border-bottom: 0; background: #fff; color: #000; font-size: 13px; }
.page p { margin: 0; line-height: 30px; }
.caret { width: 1px; height: 19px; margin-top: 5px; background: #000; }
.scroll { display: flex; flex: none; flex-direction: column; width: 16px; padding: 0 2px 2px 0; }
.scroll button { height: 13px; background: #404040; color: #aaa; }
.track { display: flex; flex: 1; flex-direction: column; padding-top: 2px; background: #2b2b2b; }
.thumb { height: 50%; background: #505050; }

.status { display: flex; align-items: center; flex: none; height: 22px; padding: 0 8px 0 7px; background: #33312f; font-size: 11px; white-space: nowrap; }
.words { margin-left: 20px; }
.proof { margin-left: 19px; }
.lang { margin-left: 18px; }
.focus { gap: 3px; margin-left: auto; margin-right: 12px; }
.view { width: 40px; height: 22px; }
.view.on { border: 0; background: #5d5b59; }
.zb { width: 18px; height: 22px; margin-left: 1px; }
.status input { appearance: none; width: 100px; height: 12px; margin: 0; background: linear-gradient(#eee, #eee) center / 100% 1px no-repeat; }
.status input::-webkit-slider-thumb { appearance: none; width: 5px; height: 11px; background: #fff; }
.pct { padding-left: 7px; }

.taskbar { display: flex; flex: none; height: 30px; padding-right: 4px; background: #3d2c57; white-space: nowrap; }
.taskbar > button { position: relative; width: 37px; height: 30px; }
.taskbar > .open::after { content: ""; position: absolute; bottom: 0; left: 4px; right: 4px; height: 2px; background: #a487bd; }
.taskbar > .current { background: #5b3a7c; }
.taskbar > .current::after { left: 0; right: 0; }
.prime { flex-direction: column; color: #ccc; font-size: 5px; line-height: 6px; font-weight: 600; }
.tray { display: flex; align-items: center; gap: 9px; margin-left: auto; padding-right: 20px; border-right: 1px solid #8d7fa0; }
.kb { margin-left: 3px; }
.clock { margin: 0 6px 0 4px; }
```
